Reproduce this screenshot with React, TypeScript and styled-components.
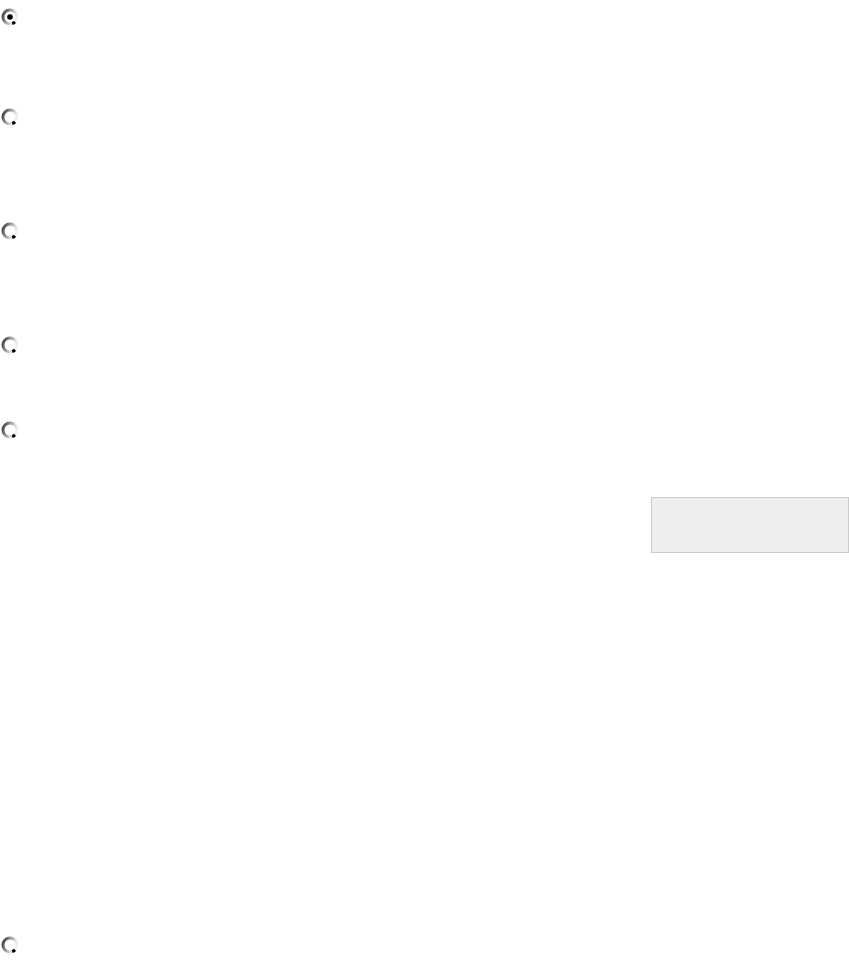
import React, { useState } from "react";
import styled, { createGlobalStyle } from "styled-components";

const GlobalStyle = createGlobalStyle`
  html, body {
    margin: 0;
    padding: 0;
    background: #ffffff;
    font-family: "Liberation Serif", serif;
  }
`;

const Form = styled.form`
  width: 849px;
  min-height: 966px;
  display: flex;
  flex-direction: column;
  padding-top: 8px;
  box-sizing: border-box;
`;

const Option = styled.label<{ $space: number }>`
  display: flex;
  flex-direction: column;
  align-items: stretch;
  padding-left: 1px;
  height: ${(p) => p.$space}px;
`;

const RadioBox = styled.span`
  width: 18px;
  height: 18px;
  display: block;
  cursor: pointer;
`;

const NoteBox = styled.div`
  align-self: flex-end;
  margin-top: 58px;
  width: 198px;
  height: 56px;
  background: #eeeeee;
  border: 1px solid #cccccc;
  box-sizing: border-box;
`;

const Radio = ({ checked, onClick }: { checked: boolean; onClick: () => void }) => (
  <RadioBox onClick={onClick}>
    <svg width="18" height="18" viewBox="0 0 18 18">
      <defs>
        <linearGradient id="ring" x1="0" y1="0.3" x2="1" y2="0.7">
          <stop offset="0" stopColor="#4a4a4a" />
          <stop offset="0.3" stopColor="#8c8c8c" />
          <stop offset="0.7" stopColor="#dcdcdc" />
          <stop offset="1" stopColor="#f6f6f6" />
        </linearGradient>
      </defs>
      <circle cx="9" cy="9" r="7" fill="#ffffff" stroke="url(#ring)" strokeWidth="3" />
      <path d="M14 13.9 A7 7 0 0 1 11.2 15.6" fill="none" stroke="#000" strokeWidth="3" />
      {checked && <circle cx="9" cy="9" r="2.8" fill="#000" />}
    </svg>
  </RadioBox>
);

const spaces = [100, 114, 114, 85, 515, 20];

export default function App() {
  const [picked, setPicked] = useState(0);
  return (
    <>
      <GlobalStyle />
      <Form>
        {spaces.map((s, i) => (
          <Option key={i} $space={s}>
            <Radio checked={picked === i} onClick={() => setPicked(i)} />
            {i === 4 && <NoteBox />}
          </Option>
        ))}
      </Form>
    </>
  );
}
